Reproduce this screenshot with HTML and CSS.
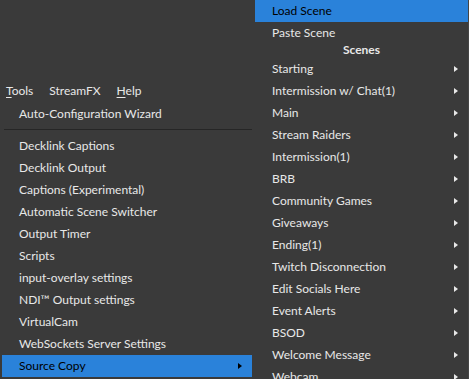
FILE: index.html
```html
<!DOCTYPE html>
<html lang="en">
<head>
    <meta charset="UTF-8">
    <title>Tools menu</title>
    <link rel="stylesheet" href="styles.css">
</head>
<body>
    <div class="window">
        <!-- Menu bar -->
        <div class="menubar">
            <span class="menubar-item"><u>T</u>ools</span>
            <span class="menubar-item">StreamFX</span>
            <span class="menubar-item"><u>H</u>elp</span>
        </div>

        <!-- Tools dropdown -->
        <ul class="menu tools-menu">
            <li class="menu-item">Auto-Configuration Wizard</li>
            <li class="menu-separator"></li>
            <li class="menu-item">Decklink Captions</li>
            <li class="menu-item">Decklink Output</li>
            <li class="menu-item">Captions (Experimental)</li>
            <li class="menu-item">Automatic Scene Switcher</li>
            <li class="menu-item">Output Timer</li>
            <li class="menu-item">Scripts</li>
            <li class="menu-item">input-overlay settings</li>
            <li class="menu-item">NDI™ Output settings</li>
            <li class="menu-item">VirtualCam</li>
            <li class="menu-item">WebSockets Server Settings</li>
            <li class="menu-item active has-sub">Source Copy</li>
        </ul>

        <!-- Source Copy submenu -->
        <ul class="menu submenu">
            <li class="menu-item active">Load Scene</li>
            <li class="menu-item">Paste Scene</li>
            <li class="menu-section">Scenes</li>
            <li class="menu-item has-sub">Starting</li>
            <li class="menu-item has-sub">Intermission w/ Chat(1)</li>
            <li class="menu-item has-sub">Main</li>
            <li class="menu-item has-sub">Stream Raiders</li>
            <li class="menu-item has-sub">Intermission(1)</li>
            <li class="menu-item has-sub">BRB</li>
            <li class="menu-item has-sub">Community Games</li>
            <li class="menu-item has-sub">Giveaways</li>
            <li class="menu-item has-sub">Ending(1)</li>
            <li class="menu-item has-sub">Twitch Disconnection</li>
            <li class="menu-item has-sub">Edit Socials Here</li>
            <li class="menu-item has-sub">Event Alerts</li>
            <li class="menu-item has-sub">BSOD</li>
            <li class="menu-item has-sub">Welcome Message</li>
            <li class="menu-item has-sub">Webcam</li>
        </ul>
    </div>
</body>
</html>
```

FILE: styles.css
```css
/* Dark Qt-like menus */
body {
    margin: 0;
    padding: 0;
    background-color: #3a3a3a;
    font-family: Lato, "Noto Sans", sans-serif;
    font-size: 12px;
    color: #e8e8e8;
    overflow: hidden;
}

.window {
    position: relative;
    width: 469px;
    height: 379px;
}

.menubar {
    display: flex;
    gap: 16px;
    padding: 80px 0 0 6px;
    height: 22px;
    line-height: 22px;
}

.menubar u {
    text-decoration-thickness: 1px;
    text-underline-offset: 2px;
}

.menu {
    list-style-type: none;
    margin: 0;
    padding: 0;
}

.tools-menu {
    width: 250px;
    margin-left: 2px;
    padding-top: 1px;
}

.menu-item {
    position: relative;
    height: 22px;
    line-height: 22px;
    padding-left: 17px;
    white-space: nowrap;
}

.menu-item.active {
    background-color: #2a82da;
    color: #000;
}

.menu-separator {
    height: 10px;
    display: flex;
    align-items: center;
    padding-left: 2px;
}

.menu-separator::after {
    content: "";
    display: block;
    width: 100%;
    height: 1px;
    margin-top: -2px;
    background-color: #262626;
}

.has-sub::after {
    content: "";
    position: absolute;
    right: 10px;
    top: 8px;
    border-left: 4px solid #e8e8e8;
    border-top: 3.5px solid transparent;
    border-bottom: 3.5px solid transparent;
}

.active.has-sub::after {
    border-left-color: #000;
}

.submenu {
    position: absolute;
    top: 0;
    left: 255px;
    width: 213px;
    height: 379px;
    background-color: #3a3a3a;
    border-right: 1px solid #454545;
}

.submenu .menu-item {
    padding-left: 17px;
}

.menu-section {
    height: 14px;
    line-height: 12px;
    text-align: center;
    font-weight: bold;
}
```
